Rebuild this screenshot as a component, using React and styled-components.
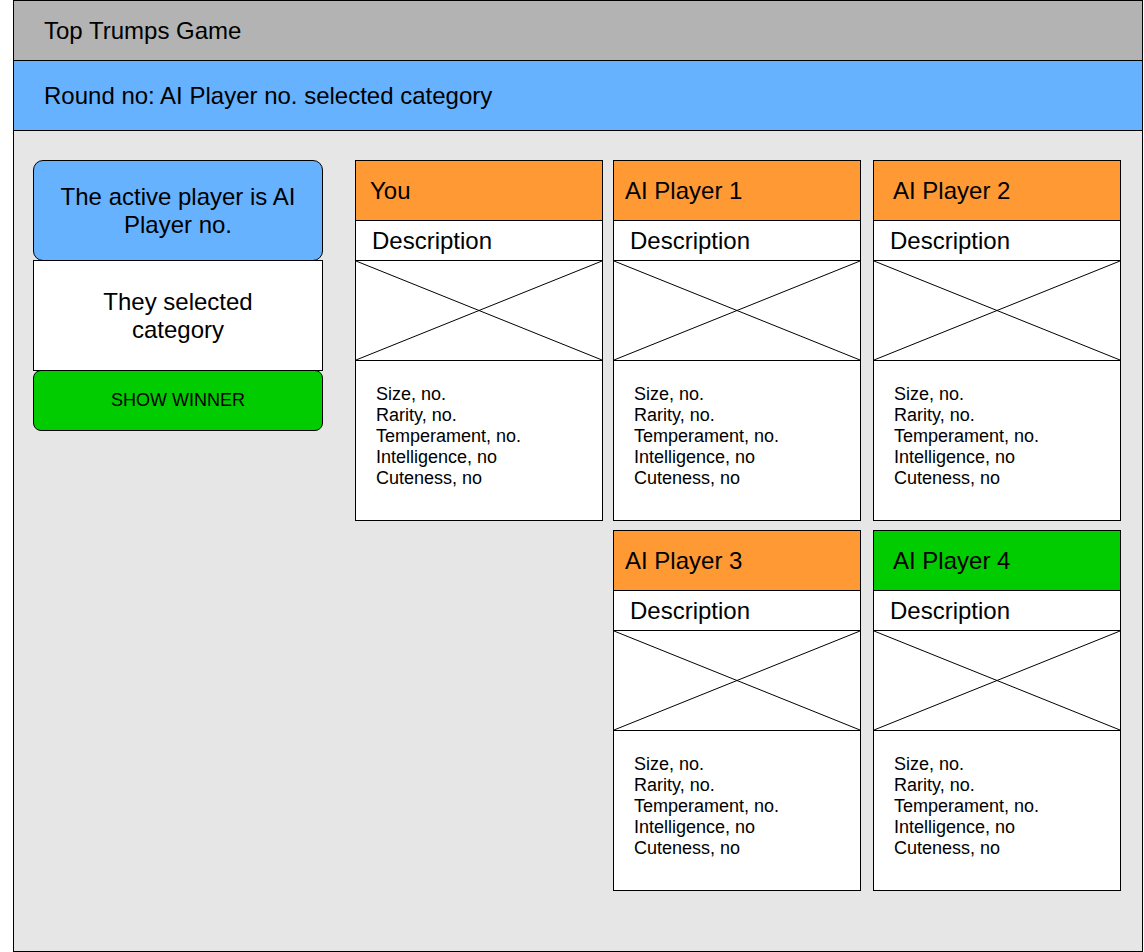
import styled, { createGlobalStyle } from 'styled-components';

const GlobalStyle = createGlobalStyle`
  html, body {
    margin: 0;
    padding: 0;
    background: #ffffff;
    font-family: "Liberation Sans", Arial, Helvetica, sans-serif;
    color: #000000;
  }
  * {
    box-sizing: border-box;
  }
`

const Frame = styled.div`
  margin-left: 13px;
  width: 1130px;
  height: 952px;
  border: 1px solid #000;
  background: #e6e6e6;
  display: flex;
  flex-direction: column;
`

const TitleBar = styled.div`
  height: 60px;
  background: #b3b3b3;
  border-bottom: 1px solid #000;
  display: flex;
  align-items: center;
  padding: 1px 0 0 30px;
  font-size: 24px;
`

const RoundBar = styled.div`
  height: 70px;
  background: #66b2ff;
  border-bottom: 1px solid #000;
  display: flex;
  align-items: center;
  padding: 1px 0 0 30px;
  font-size: 24px;
`

const Main = styled.div`
  display: flex;
  align-items: flex-start;
  gap: 32px;
  padding: 29px 0 0 19px;
`

const SidePanel = styled.div`
  width: 290px;
  display: flex;
  flex-direction: column;
`

const ActiveBox = styled.div`
  height: 101px;
  background: #66b2ff;
  border: 1px solid #000;
  border-radius: 10px;
  display: flex;
  align-items: center;
  justify-content: center;
  text-align: center;
  font-size: 24px;
  line-height: 28px;
  padding: 0 14px;
`

const CategoryBox = styled.div`
  height: 111px;
  margin-top: -1px;
  background: #fff;
  border: 1px solid #000;
  display: flex;
  align-items: center;
  justify-content: center;
  text-align: center;
  font-size: 24px;
  line-height: 28px;
  padding: 0 60px;
`

const WinnerButton = styled.button`
  height: 61px;
  margin-top: -1px;
  background: #00cc00;
  border: 1px solid #000;
  border-radius: 8px;
  font-family: inherit;
  font-size: 18px;
  color: #000;
  cursor: pointer;
`

const CardGrid = styled.div`
  display: grid;
  grid-template-columns: 258px 260px 248px;
  row-gap: 9px;
`

const Card = styled.div`
  width: 248px;
  display: flex;
  flex-direction: column;
  border: 1px solid #000;
  background: #fff;
  grid-column-start: ${p => p.$col || 'auto'};
`

const CardHeader = styled.div`
  height: 60px;
  background: ${p => p.$bg};
  border-bottom: 1px solid #000;
  display: flex;
  align-items: center;
  padding-left: ${p => p.$pad}px;
  font-size: 24px;
`

const Description = styled.div`
  height: 40px;
  border-bottom: 1px solid #000;
  display: flex;
  align-items: center;
  padding-left: 16px;
  font-size: 24px;
`

const Picture = styled.div`
  height: 100px;
  border-bottom: 1px solid #000;

  svg {
    display: block;
    width: 100%;
    height: 100%;
  }
`

const Stats = styled.ul`
  list-style: none;
  margin: 0;
  height: 159px;
  padding: 23px 0 0 20px;
  font-size: 18px;
  line-height: 21px;
`

const players = [
  { name: 'You', bg: '#ff9933', pad: 14 },
  { name: 'AI Player 1', bg: '#ff9933', pad: 11 },
  { name: 'AI Player 2', bg: '#ff9933', pad: 19 },
  { name: 'AI Player 3', bg: '#ff9933', pad: 11, col: 2 },
  { name: 'AI Player 4', bg: '#00cc00', pad: 19 },
]

const stats = ['Size, no.', 'Rarity, no.', 'Temperament, no.', 'Intelligence, no', 'Cuteness, no']

const PlayerCard = ({ player }) => (
  <Card $col={player.col}>
    <CardHeader $bg={player.bg} $pad={player.pad}>{player.name}</CardHeader>
    <Description>Description</Description>
    <Picture>
      <svg viewBox="0 0 246 99" preserveAspectRatio="none">
        <line x1="0" y1="0" x2="246" y2="99" stroke="#000" strokeWidth="1" vectorEffect="non-scaling-stroke" />
        <line x1="246" y1="0" x2="0" y2="99" stroke="#000" strokeWidth="1" vectorEffect="non-scaling-stroke" />
      </svg>
    </Picture>
    <Stats>
      {stats.map(s => <li key={s}>{s}</li>)}
    </Stats>
  </Card>
)

export default function App() {
  return (
    <>
      <GlobalStyle />
      <Frame>
        <TitleBar>Top Trumps Game</TitleBar>
        <RoundBar>Round no: AI Player no. selected category</RoundBar>
        <Main>
          <SidePanel>
            <ActiveBox>The active player is AI Player no.</ActiveBox>
            <CategoryBox>They selected category</CategoryBox>
            <WinnerButton>SHOW WINNER</WinnerButton>
          </SidePanel>
          <CardGrid>
            {players.map(p => <PlayerCard key={p.name} player={p} />)}
          </CardGrid>
        </Main>
      </Frame>
    </>
  )
}
